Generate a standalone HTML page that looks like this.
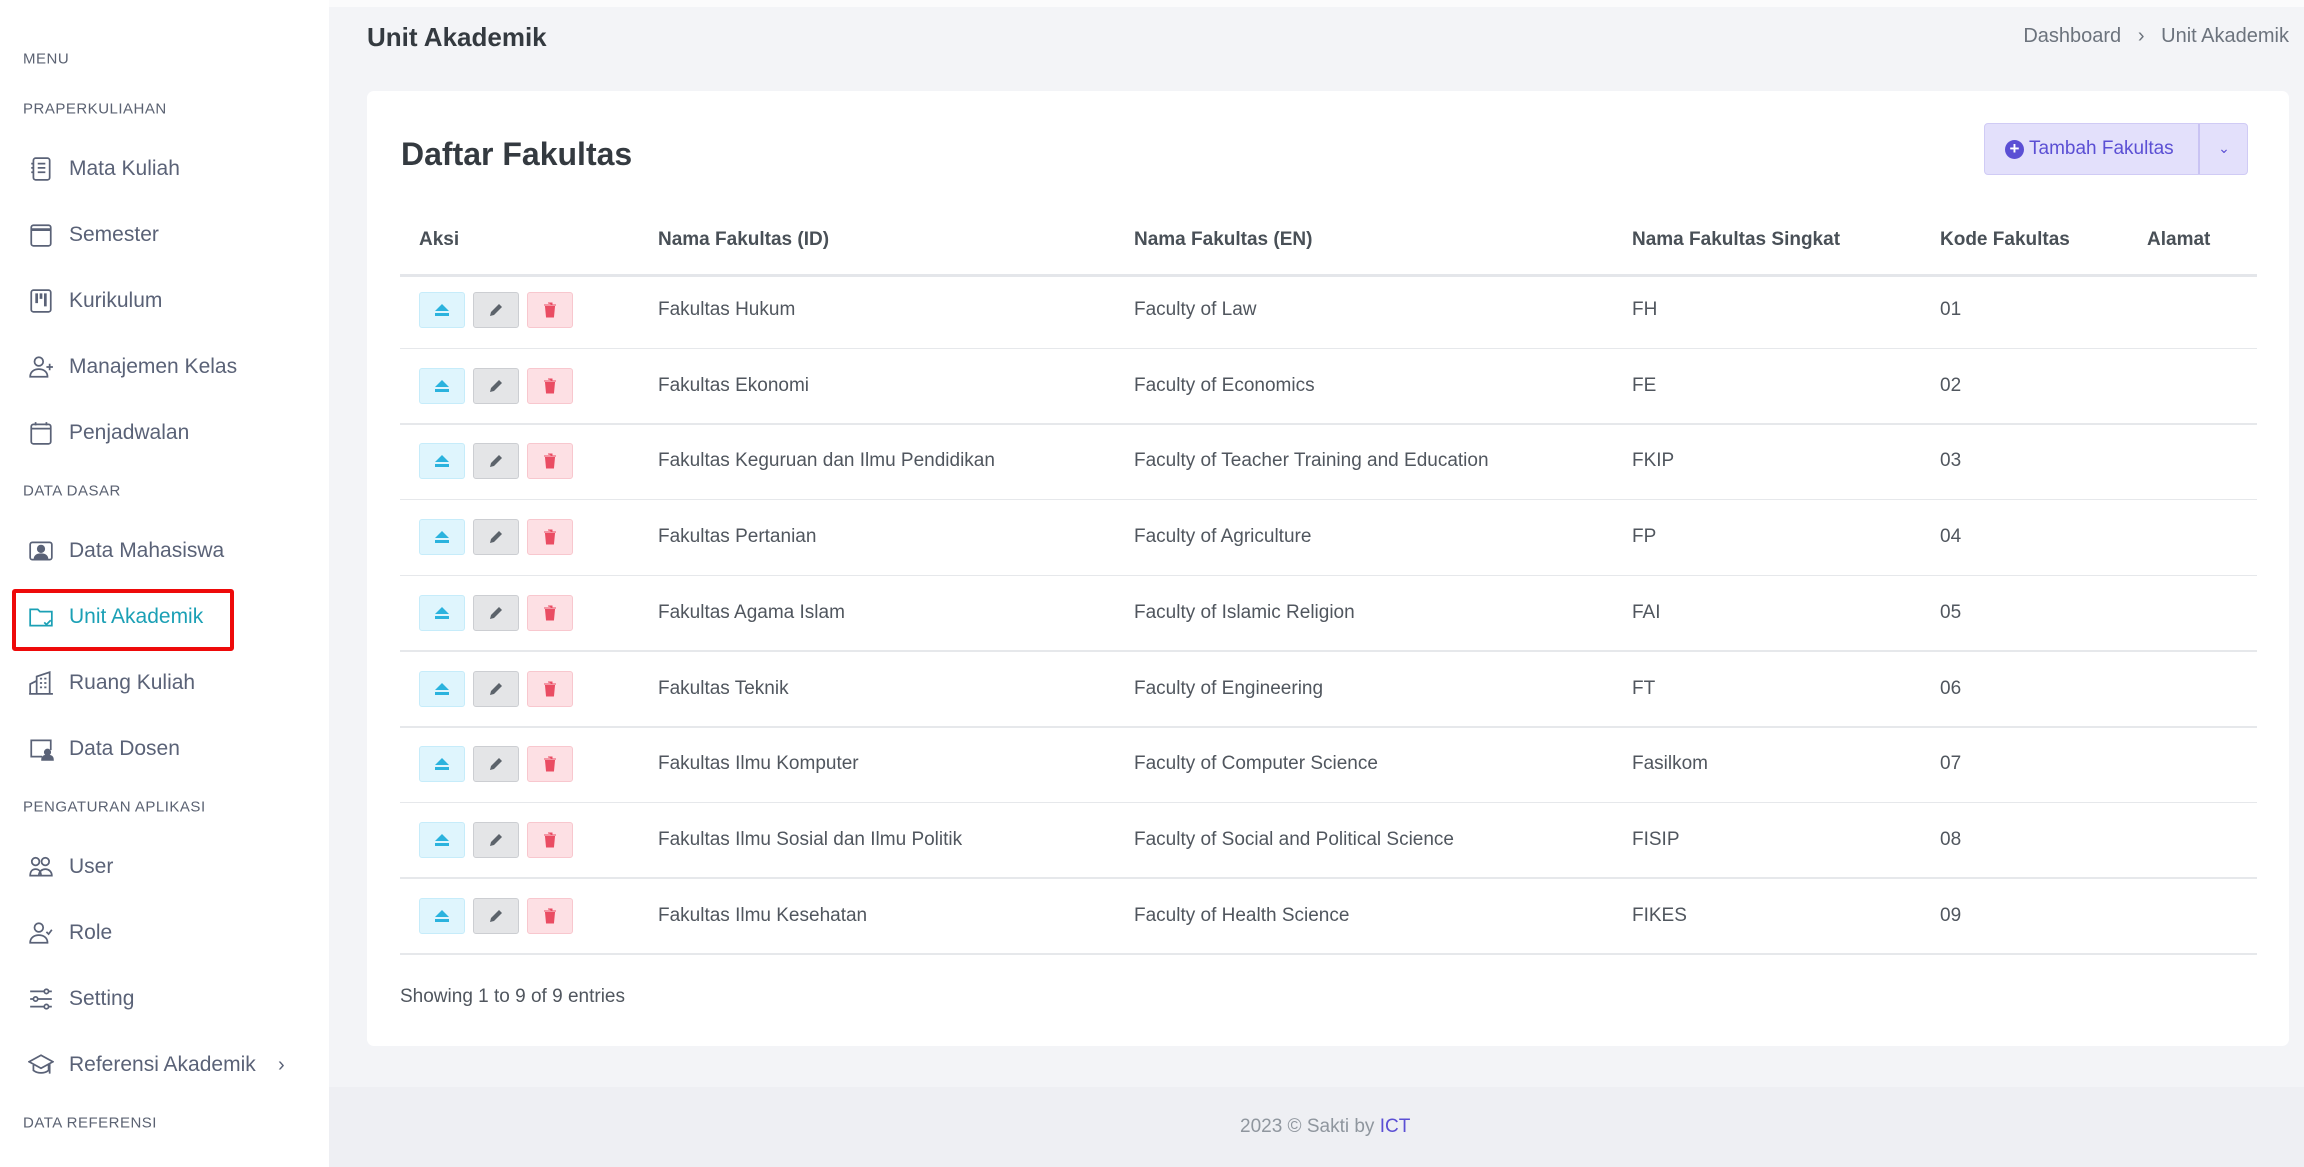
<!DOCTYPE html>
<html><head><meta charset="utf-8"><style>
*{box-sizing:border-box;margin:0;padding:0}
body{width:2304px;height:1167px;overflow:hidden;background:#f3f4f7;font-family:"Liberation Sans",sans-serif;position:relative;color:#495057}
.side{position:absolute;left:0;top:0;width:329px;height:1167px;background:#fff}
.lbl{position:absolute;left:23px;font-size:15px;color:#5b6272;letter-spacing:.5px;transform:translateY(-50%)}
.it{position:absolute;left:28px;height:30px;display:flex;align-items:center;transform:translateY(-50%);font-size:21px;color:#5a6277}
.it svg{width:26px;height:26px;margin-right:15px;fill:none;stroke:#5a6277;stroke-width:1.6}
.top{position:absolute;left:329px;top:0;right:0;height:7px;background:#fbfbfc}
h1{position:absolute;left:367px;top:22px;font-size:26px;font-weight:600;color:#343a40}
.bc{position:absolute;right:15px;top:25px;font-size:20px;color:#6c737d}
.card{position:absolute;left:367px;top:91px;width:1922px;height:955px;background:#fff;border-radius:7px}
h2{position:absolute;left:34px;top:45px;font-size:32px;font-weight:bold;color:#343a40}
.btn{position:absolute;left:1617px;top:32px;width:264px;height:52px;background:#e3e0fb;border:1px solid #d0cbf5;border-radius:4px;color:#5b4fd4;font-size:19px}
.btn .a{position:absolute;left:20px;top:14px;display:flex;align-items:center}
.btn .a span{display:inline-block;width:19px;height:19px;border-radius:50%;background:#5b4fd4;color:#fff;font-size:17px;line-height:18px;text-align:center;margin-right:5px;font-weight:bold}
.btn .d{position:absolute;left:213px;top:0;bottom:0;border-left:2px solid #c9c3f3;width:50px;text-align:center;line-height:48px;font-size:14px}
.th{position:absolute;top:149px;font-size:19px;font-weight:bold;color:#495057;transform:translateY(-50%)}
.hl{position:absolute;left:33px;width:1857px;top:183px;height:3px;background:#e4e6ea}
.rl{position:absolute;left:33px;width:1857px;height:1.5px;background:#e6e8eb}
.td{position:absolute;font-size:19px;color:#50565e;transform:translateY(-50%)}
.b{position:absolute;width:46px;height:36px;border-radius:3px;transform:translateY(-50%);display:flex;align-items:center;justify-content:center}
.b1{background:#dff5fd;border:1px solid #c6ecfa}
.b2{background:#e4e5e7;border:1px solid #ccced2}
.b3{background:#fde0e4;border:1px solid #f8c7ce}
.foot{position:absolute;left:329px;top:1087px;right:0;bottom:0;background:#eeeff3}
.ft{position:absolute;left:1240px;top:1116px;font-size:19px;color:#8f969e}
</style></head><body>
<div class="side">
<div class="lbl" style="top:59px">MENU</div>
<div class="lbl" style="top:109px">PRAPERKULIAHAN</div>
<div class="it" style="top:169px"><svg viewBox="0 0 24 24"><rect x="5" y="2" width="15" height="20" rx="2"/><path d="M9 7h7M9 11h7M9 15h7M3 7h2M3 11h2M3 15h2"/></svg>Mata Kuliah</div>
<div class="it" style="top:235px"><svg viewBox="0 0 24 24"><rect x="3" y="3" width="18" height="19" rx="2"/><path d="M3 7h18" stroke-width="2.5"/></svg>Semester</div>
<div class="it" style="top:301px"><svg viewBox="0 0 24 24"><rect x="3" y="2" width="18" height="20" rx="2"/><path d="M8 5v9M12 5v5M16 5v12" stroke-width="2.5"/></svg>Kurikulum</div>
<div class="it" style="top:367px"><svg viewBox="0 0 24 24"><circle cx="10" cy="7" r="4"/><path d="M2 21c0-5 4-7 8-7s8 2 8 7zM20 9v6M17 12h6"/></svg>Manajemen Kelas</div>
<div class="it" style="top:433px"><svg viewBox="0 0 24 24"><rect x="3" y="4" width="18" height="18" rx="2"/><path d="M3 8h18M7 2v3M17 2v3"/></svg>Penjadwalan</div>
<div class="lbl" style="top:491px">DATA DASAR</div>
<div class="it" style="top:551px"><svg viewBox="0 0 24 24"><rect x="2" y="4" width="20" height="16" rx="2"/><circle cx="12" cy="10" r="3" fill="#5a6277"/><path d="M6 20c0-4 3-5 6-5s6 1 6 5" fill="#5a6277"/></svg>Data Mahasiswa</div>
<div class="it" style="top:617px;color:#1ba0b5"><svg viewBox="0 0 24 24" style="stroke:#1ba0b5"><path d="M2 5h7l2 2h11v13H2z"/><path d="M15 17l2 2 4-4"/></svg>Unit Akademik</div>
<div style="position:absolute;left:12px;top:589px;width:222px;height:62px;border:4px solid #ee0a0a;border-radius:3px"></div>
<div class="it" style="top:683px"><svg viewBox="0 0 24 24"><path d="M2 22V13l6-3v12M8 22V6l12-4v20zM1 22h22M11 8h2M15 8h2M11 12h2M15 12h2M11 16h2M15 16h2"/></svg>Ruang Kuliah</div>
<div class="it" style="top:749px"><svg viewBox="0 0 24 24"><path d="M13 19H3V4h18v9"/><circle cx="18" cy="15" r="2.5" fill="#5a6277"/><path d="M13 22c0-3 2-4 5-4s5 1 5 4z" fill="#5a6277"/></svg>Data Dosen</div>
<div class="lbl" style="top:807px">PENGATURAN APLIKASI</div>
<div class="it" style="top:867px"><svg viewBox="0 0 24 24"><circle cx="7" cy="7" r="3.5"/><circle cx="16" cy="7" r="3.5"/><path d="M2 20c0-4 2-6 5-6s5 2 5 6zM10 20c0-4 3-6 6-6s6 2 6 6z"/></svg>User</div>
<div class="it" style="top:933px"><svg viewBox="0 0 24 24"><circle cx="10" cy="7" r="4"/><path d="M2 21c0-5 4-7 8-7s8 2 8 7zM17 11l2 2 3-4"/></svg>Role</div>
<div class="it" style="top:999px"><svg viewBox="0 0 24 24"><path d="M2 5h13M19 5h3M2 12h3M9 12h13M2 19h13M19 19h3"/><circle cx="17" cy="5" r="2"/><circle cx="7" cy="12" r="2"/><circle cx="17" cy="19" r="2"/></svg>Setting</div>
<div class="it" style="top:1065px"><svg viewBox="0 0 24 24"><path d="M12 3L1 9l11 6 11-6zM5 12v5c4 3 10 3 14 0v-5M20 10v10"/></svg>Referensi Akademik<span style="position:absolute;left:250px;font-size:20px">›</span></div>
<div class="lbl" style="top:1123px">DATA REFERENSI</div>
</div>
<div class="top"></div>
<h1>Unit Akademik</h1>
<div class="bc">Dashboard &nbsp; › &nbsp; Unit Akademik</div>
<div class="card">
<h2>Daftar Fakultas</h2>
<div class="btn"><div class="a"><span>+</span>Tambah Fakultas</div><div class="d">⌄</div></div>
<div class="th" style="left:52px">Aksi</div>
<div class="th" style="left:291px">Nama Fakultas (ID)</div>
<div class="th" style="left:767px">Nama Fakultas (EN)</div>
<div class="th" style="left:1265px">Nama Fakultas Singkat</div>
<div class="th" style="left:1573px">Kode Fakultas</div>
<div class="th" style="left:1780px">Alamat</div>
<div class="hl"></div>
<div id="rows"></div>
<div class="td" style="left:33px;top:906px">Showing 1 to 9 of 9 entries</div>
</div>
<div class="foot"></div>
<div class="ft">2023 © Sakti by <span style="color:#5b4fd4">ICT</span></div>
<script>
var d=[["Fakultas Hukum","Faculty of Law","FH","01"],["Fakultas Ekonomi","Faculty of Economics","FE","02"],["Fakultas Keguruan dan Ilmu Pendidikan","Faculty of Teacher Training and Education","FKIP","03"],["Fakultas Pertanian","Faculty of Agriculture","FP","04"],["Fakultas Agama Islam","Faculty of Islamic Religion","FAI","05"],["Fakultas Teknik","Faculty of Engineering","FT","06"],["Fakultas Ilmu Komputer","Faculty of Computer Science","Fasilkom","07"],["Fakultas Ilmu Sosial dan Ilmu Politik","Faculty of Social and Political Science","FISIP","08"],["Fakultas Ilmu Kesehatan","Faculty of Health Science","FIKES","09"]];
var h="";
var ej='<svg width="16" height="14" viewBox="0 0 16 14"><path d="M8 1l7 7H1z M1 10h14v3H1z" fill="#2bb3de"/></svg>';
var pc='<svg width="16" height="16" viewBox="0 0 16 16"><path d="M2 14l1-4 8-8 3 3-8 8z" fill="#5c636b"/></svg>';
var tr='<svg width="14" height="16" viewBox="0 0 14 16"><path d="M1 3h12M5 1h4v2M2.5 4.5h9l-1 10.5h-7z" fill="#ea4d63" stroke="#ea4d63"/></svg>';
for(var i=0;i<9;i++){var y=219+i*75.7;
h+='<div class="b b1" style="left:52px;top:'+y+'px">'+ej+'</div><div class="b b2" style="left:106px;top:'+y+'px">'+pc+'</div><div class="b b3" style="left:160px;top:'+y+'px">'+tr+'</div>';
h+='<div class="td" style="left:291px;top:'+y+'px">'+d[i][0]+'</div><div class="td" style="left:767px;top:'+y+'px">'+d[i][1]+'</div><div class="td" style="left:1265px;top:'+y+'px">'+d[i][2]+'</div><div class="td" style="left:1573px;top:'+y+'px">'+d[i][3]+'</div>';
h+='<div class="rl" style="top:'+(y+37.5)+'px"></div>';}
document.getElementById("rows").innerHTML=h;
</script>
</body></html>
